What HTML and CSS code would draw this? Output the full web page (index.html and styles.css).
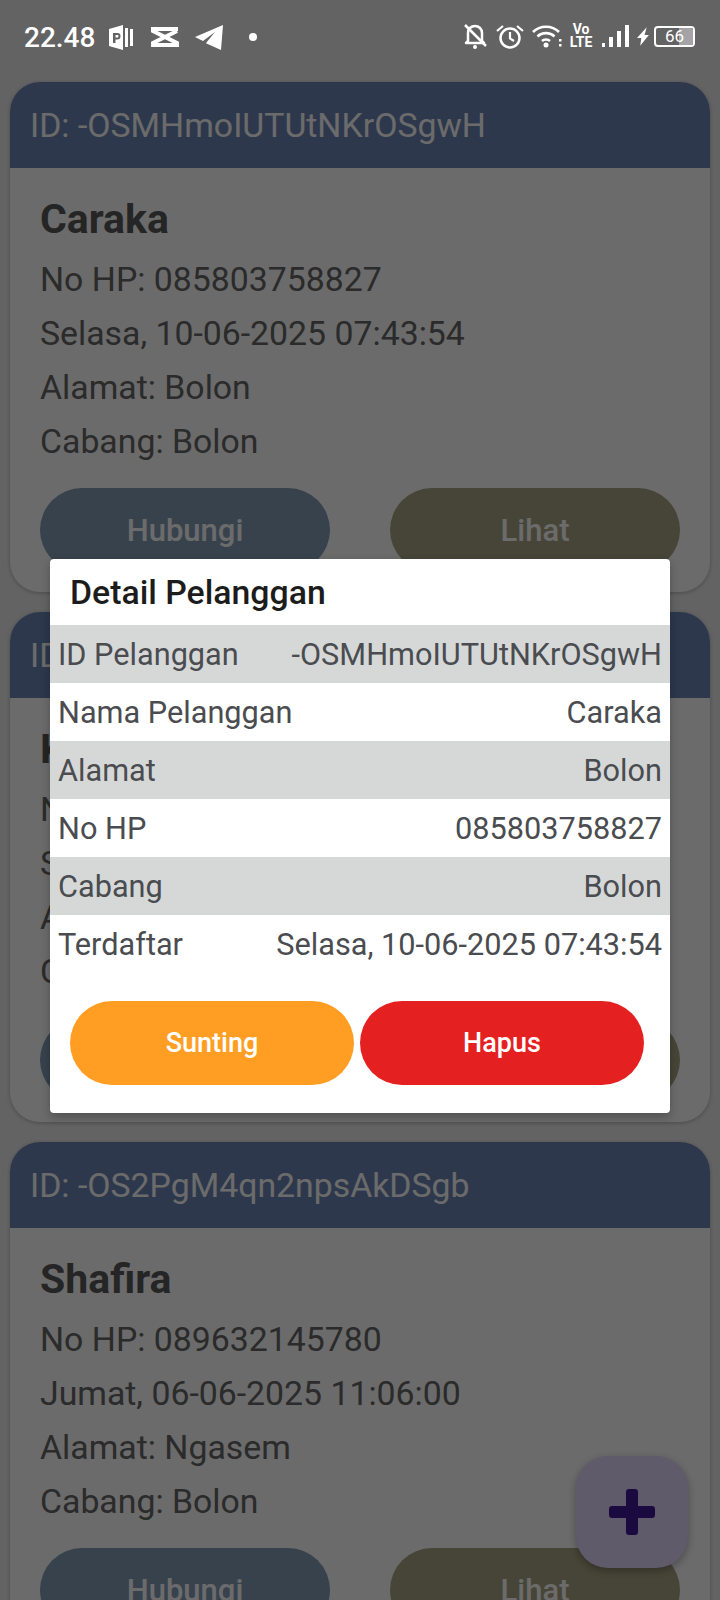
FILE: index.html
```html
<!DOCTYPE html>
<html lang="id">

<head>
    <meta charset="UTF-8">
    <meta name="viewport" content="width=device-width, initial-scale=1.0">
    <title>Data Pelanggan</title>
    <link rel="stylesheet" href="styles.css">
</head>

<body>
    <div class="screen">
        <header class="status-bar">
            <div class="status-left">
                <span class="status-time">22.48</span>
                <svg class="ic-ppt" width="26" height="25" viewBox="0 0 26 25">
                    <path fill="#fff" d="M1 4 15 0v25L1 21zM5 8v10h2.500v-3.500H9.500c2 0 3-1.300 3-3.300S11.500 8 9.500 8zM7.500 10h1.800c.8 0 1.200.5 1.200 1.200s-.4 1.300-1.200 1.300H7.500z" fill-rule="evenodd" />
                    <rect fill="#fff" x="17" y="3" width="3" height="19" />
                    <rect fill="#fff" x="22" y="4" width="3" height="17" />
                </svg>
                <svg class="ic-capcut" width="28" height="22" viewBox="0 0 28 22">
                    <path fill="none" stroke="#fff" stroke-width="4" d="M27 3H2v2l24 12v2H2v-2L26 5" />
                </svg>
                <svg class="ic-telegram" width="28" height="25" viewBox="0 0 28 25">
                    <path fill="#fff" d="M28 0 0 12l8 4L20 7l-9 11 .5 .5L26 25z" />
                </svg>
                <span class="status-dot"></span>
            </div>
            <div class="status-right">
                <svg width="24" height="26" viewBox="0 0 24 26">
                    <path fill="none" stroke="#fff" stroke-width="2.500" stroke-linejoin="round" d="M5 18V10c0-4 3-7 7-7s7 3 7 7v8l2 2H3z" />
                    <path stroke="#fff" stroke-width="2.500" d="M2 2l21 21" />
                    <circle fill="#fff" cx="12" cy="24" r="2" />
                </svg>
                <svg class="ic-alarm" width="28" height="25" viewBox="0 0 28 25">
                    <circle fill="none" stroke="#fff" stroke-width="2.500" cx="14" cy="14" r="9.500" />
                    <path fill="none" stroke="#fff" stroke-width="2.200" d="M14 8v6.500l4 2.500M1 7l6-5M27 7l-6-5" />
                </svg>
                <svg class="ic-wifi" width="30" height="24" viewBox="0 0 30 24">
                    <path fill="none" stroke="#fff" stroke-width="2.600" d="M1 8c7-7 19-7 26 0M5.500 12.500c4.500-4.500 12.500-4.500 17 0M10 17c2.200-2 5.800-2 8 0" />
                    <circle fill="#fff" cx="14" cy="21" r="2.500" />
                    <rect fill="#fff" x="27" y="15" width="2.500" height="2.500" />
                    <rect fill="#fff" x="27" y="20" width="2.500" height="2.500" />
                </svg>
                <div class="volte"><span>Vo</span><span>LTE</span></div>
                <div class="signal">
                    <i class="bar-1"></i><i class="bar-2"></i><i class="bar-3"></i><i class="bar-4"></i>
                </div>
                <svg class="ic-bolt" width="14" height="19" viewBox="0 0 13 17">
                    <path fill="#fff" d="M9 0 0 10h4l-1 7 8-10H7z" />
                </svg>
                <div class="battery"><span class="battery-fill"></span><span class="battery-num">66</span></div>
            </div>
        </header>

        <main class="card-list">
            <section class="card">
                <div class="card-head">ID: -OSMHmoIUTUtNKrOSgwH</div>
                <div class="card-body">
                    <h2>Caraka</h2>
                    <p>No HP: 085803758827</p>
                    <p>Selasa, 10-06-2025 07:43:54</p>
                    <p>Alamat: Bolon</p>
                    <p>Cabang: Bolon</p>
                    <div class="card-actions">
                        <button class="btn-call">Hubungi</button>
                        <button class="btn-view">Lihat</button>
                    </div>
                </div>
            </section>
            <section class="card">
                <div class="card-head">ID: -OSKpLw2nVtRzYcQ8mJd</div>
                <div class="card-body">
                    <h2>Kirana</h2>
                    <p>No HP: 081234567890</p>
                    <p>Senin, 09-06-2025 10:12:30</p>
                    <p>Alamat: Bolon</p>
                    <p>Cabang: Bolon</p>
                    <div class="card-actions">
                        <button class="btn-call">Hubungi</button>
                        <button class="btn-view">Lihat</button>
                    </div>
                </div>
            </section>
            <section class="card">
                <div class="card-head">ID: -OS2PgM4qn2npsAkDSgb</div>
                <div class="card-body">
                    <h2>Shafira</h2>
                    <p>No HP: 089632145780</p>
                    <p>Jumat, 06-06-2025 11:06:00</p>
                    <p>Alamat: Ngasem</p>
                    <p>Cabang: Bolon</p>
                    <div class="card-actions">
                        <button class="btn-call">Hubungi</button>
                        <button class="btn-view">Lihat</button>
                    </div>
                </div>
            </section>
        </main>

        <button class="fab">
            <svg width="46" height="46" viewBox="0 0 46 46">
                <rect class="fab-plus" x="17" y="0" width="12" height="46" rx="3" />
                <rect class="fab-plus" x="0" y="17" width="46" height="12" rx="3" />
            </svg>
        </button>

        <div class="scrim"></div>

        <div class="dialog">
            <h3>Detail Pelanggan</h3>
            <div class="detail-row"><span>ID Pelanggan</span><span>-OSMHmoIUTUtNKrOSgwH</span></div>
            <div class="detail-row"><span>Nama Pelanggan</span><span>Caraka</span></div>
            <div class="detail-row"><span>Alamat</span><span>Bolon</span></div>
            <div class="detail-row"><span>No HP</span><span>085803758827</span></div>
            <div class="detail-row"><span>Cabang</span><span>Bolon</span></div>
            <div class="detail-row"><span>Terdaftar</span><span>Selasa, 10-06-2025 07:43:54</span></div>
            <div class="dialog-actions">
                <button class="btn-edit">Sunting</button>
                <button class="btn-delete">Hapus</button>
            </div>
        </div>
    </div>
</body>

</html>
```

FILE: styles.css
```css
* {
    box-sizing: border-box;
}

body {
    margin: 0;
    font-family: Roboto, "Liberation Sans", sans-serif;
}

.screen {
    position: relative;
    width: 720px;
    height: 1600px;
    overflow: hidden;
    background-color: #efecef;
}

/* status bar */
.status-bar {
    position: relative;
    z-index: 3;
    display: flex;
    justify-content: space-between;
    align-items: center;
    height: 74px;
    padding: 0 25px 0 24px;
    color: #fff;
}

.status-left,
.status-right {
    display: flex;
    align-items: center;
}

.status-right {
    margin-bottom: 2px;
}

.status-time {
    width: 84px;
    font-size: 28px;
    font-weight: 500;
}

.ic-capcut {
    margin-left: 17px;
}

.ic-telegram {
    margin-left: 16px;
}

.status-dot {
    width: 8px;
    height: 8px;
    margin-left: 26px;
    border-radius: 50%;
    background-color: #fff;
}

.ic-alarm {
    margin-left: 9px;
}

.ic-wifi {
    margin-left: 8px;
}

.volte {
    display: flex;
    flex-direction: column;
    align-items: center;
    width: 28px;
    margin-left: 5px;
    font-size: 14px;
    font-weight: 700;
    line-height: 13px;
}

.signal {
    display: flex;
    align-items: flex-end;
    gap: 4px;
    height: 22px;
    margin-left: 7px;
}

.signal i {
    width: 4px;
    background-color: #fff;
}

.signal .bar-1 {
    width: 3px;
    height: 4px;
}

.signal .bar-2 {
    height: 10px;
}

.signal .bar-3 {
    height: 16px;
}

.signal .bar-4 {
    height: 22px;
}

.ic-bolt {
    margin-left: 8px;
}

.battery {
    position: relative;
    width: 41px;
    height: 21px;
    margin-left: 3px;
    border: 2px solid #fff;
    border-radius: 4px;
    text-align: center;
    font-size: 17px;
    line-height: 17px;
}

.battery-fill {
    position: absolute;
    top: 0;
    right: 0;
    bottom: 0;
    width: 14px;
    background-color: #a5a3a5;
}

.battery-num {
    position: relative;
}

/* cards */
.card-list {
    display: flex;
    flex-direction: column;
    gap: 20px;
    padding: 8px 10px 0;
}

.card {
    flex: none;
    height: 510px;
    overflow: hidden;
    border-radius: 30px;
    background-color: #fff;
    box-shadow: 0 1px 4px rgba(0, 0, 0, 0.25);
}

.card-head {
    height: 86px;
    padding-left: 20px;
    background-color: #6d85b5;
    color: #fff;
    font-size: 33.800px;
    line-height: 88px;
}

.card-body {
    padding: 27px 30px 0;
    color: #666;
}

.card-body h2 {
    margin: 0;
    height: 58px;
    color: #5a5a5a;
    font-size: 41px;
    font-weight: 700;
    line-height: 48px;
}

.card-body p {
    margin: 0;
    height: 54px;
    font-size: 33.800px;
    line-height: 54px;
}

.card-actions {
    display: flex;
    gap: 60px;
    margin-top: 19px;
}

.card-actions button {
    flex: 1;
    height: 84px;
    border: none;
    border-radius: 42px;
    color: #fff;
    font-family: inherit;
    font-size: 31px;
    font-weight: 500;
}

.btn-call {
    background-color: #839db7;
}

.btn-view {
    background-color: #a9a584;
}

.fab {
    position: absolute;
    top: 1456px;
    left: 576px;
    display: flex;
    align-items: center;
    justify-content: center;
    width: 112px;
    height: 112px;
    border: none;
    border-radius: 32px;
    background-color: #e2d8ff;
    box-shadow: 0 3px 8px rgba(0, 0, 0, 0.3);
}

.fab-plus {
    fill: #3f1a96;
}

.scrim {
    position: absolute;
    top: 0;
    right: 0;
    bottom: 0;
    left: 0;
    background-color: rgba(0, 0, 0, 0.58);
}

/* dialog */
.dialog {
    position: absolute;
    top: 559px;
    left: 50px;
    width: 620px;
    height: 554px;
    border-radius: 4px;
    background-color: #fff;
    box-shadow: 0 4px 10px rgba(0, 0, 0, 0.25);
}

.dialog h3 {
    margin: 0;
    height: 66px;
    padding-left: 20px;
    color: #1c1c1c;
    font-size: 33.800px;
    font-weight: 500;
    line-height: 68px;
}

.detail-row {
    display: flex;
    justify-content: space-between;
    height: 58px;
    padding: 0 8px;
    color: #4a4c50;
    font-size: 30.700px;
    line-height: 60px;
}

.detail-row:nth-of-type(odd) {
    background-color: #d6d8d8;
}

.dialog-actions {
    display: flex;
    gap: 6px;
    margin-top: 28px;
    padding-left: 20px;
}

.dialog-actions button {
    width: 284px;
    height: 84px;
    border: none;
    border-radius: 42px;
    color: #fff;
    font-family: inherit;
    font-size: 27px;
    font-weight: 500;
}

.btn-edit {
    background-color: #ff9e22;
}

.btn-delete {
    background-color: #e52020;
}
```
